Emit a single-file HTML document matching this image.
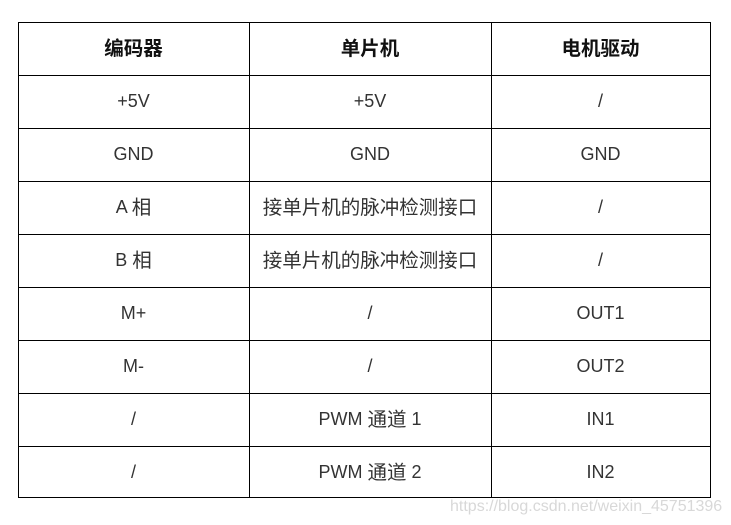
<!DOCTYPE html><html><head><style>
body{margin:0;width:731px;height:525px;background:#fff;position:relative;font-family:"Liberation Sans","Noto Sans CJK SC",sans-serif;overflow:hidden}
.h,.v{position:absolute;background:#000}
.h{height:1px;left:18px;width:693px}
.v{width:1px;top:22px;height:476px}
.t{position:absolute;display:flex;align-items:center;justify-content:center;height:53px;font-size:18px;color:#333;line-height:1;white-space:pre}
.t span{font-family:"Noto Sans CJK SC",sans-serif;font-size:19.5px;line-height:1;position:relative;top:-1px}
.b{font-weight:bold;color:#111}
.wm{position:absolute;left:450px;top:498px;font-size:16px;color:#d8d8d8;letter-spacing:0}
</style></head><body>
<div class="h" style="top:22px"></div><div class="h" style="top:75px"></div><div class="h" style="top:128px"></div><div class="h" style="top:181px"></div><div class="h" style="top:234px"></div><div class="h" style="top:287px"></div><div class="h" style="top:340px"></div><div class="h" style="top:393px"></div><div class="h" style="top:446px"></div><div class="h" style="top:497px"></div>
<div class="v" style="left:18px"></div><div class="v" style="left:249px"></div><div class="v" style="left:491px"></div><div class="v" style="left:710px"></div>
<div id="c"></div>
<script>
var rows=[["<span>编码器</span>","<span>单片机</span>","<span>电机驱动</span>"],["+5V","+5V","/"],["GND","GND","GND"],["A <span>相</span>","<span>接单片机的脉冲检测接口</span>","/"],["B <span>相</span>","<span>接单片机的脉冲检测接口</span>","/"],["M+","/","OUT1"],["M-","/","OUT2"],["/","PWM <span>通道</span> 1","IN1"],["/","PWM <span>通道</span> 2","IN2"]];
var xs=[[18,249],[249,491],[491,710]],h="";
rows.forEach(function(r,i){var top=22+i*53-1;r.forEach(function(t,j){h+='<div class="t'+(i==0?' b':'')+'" style="top:'+top+'px;left:'+xs[j][0]+'px;width:'+(xs[j][1]-xs[j][0])+'px">'+t+'</div>';});});
document.getElementById('c').innerHTML=h;
</script>
<div class="wm">https://blog.csdn.net/weixin_45751396</div>
</body></html>
